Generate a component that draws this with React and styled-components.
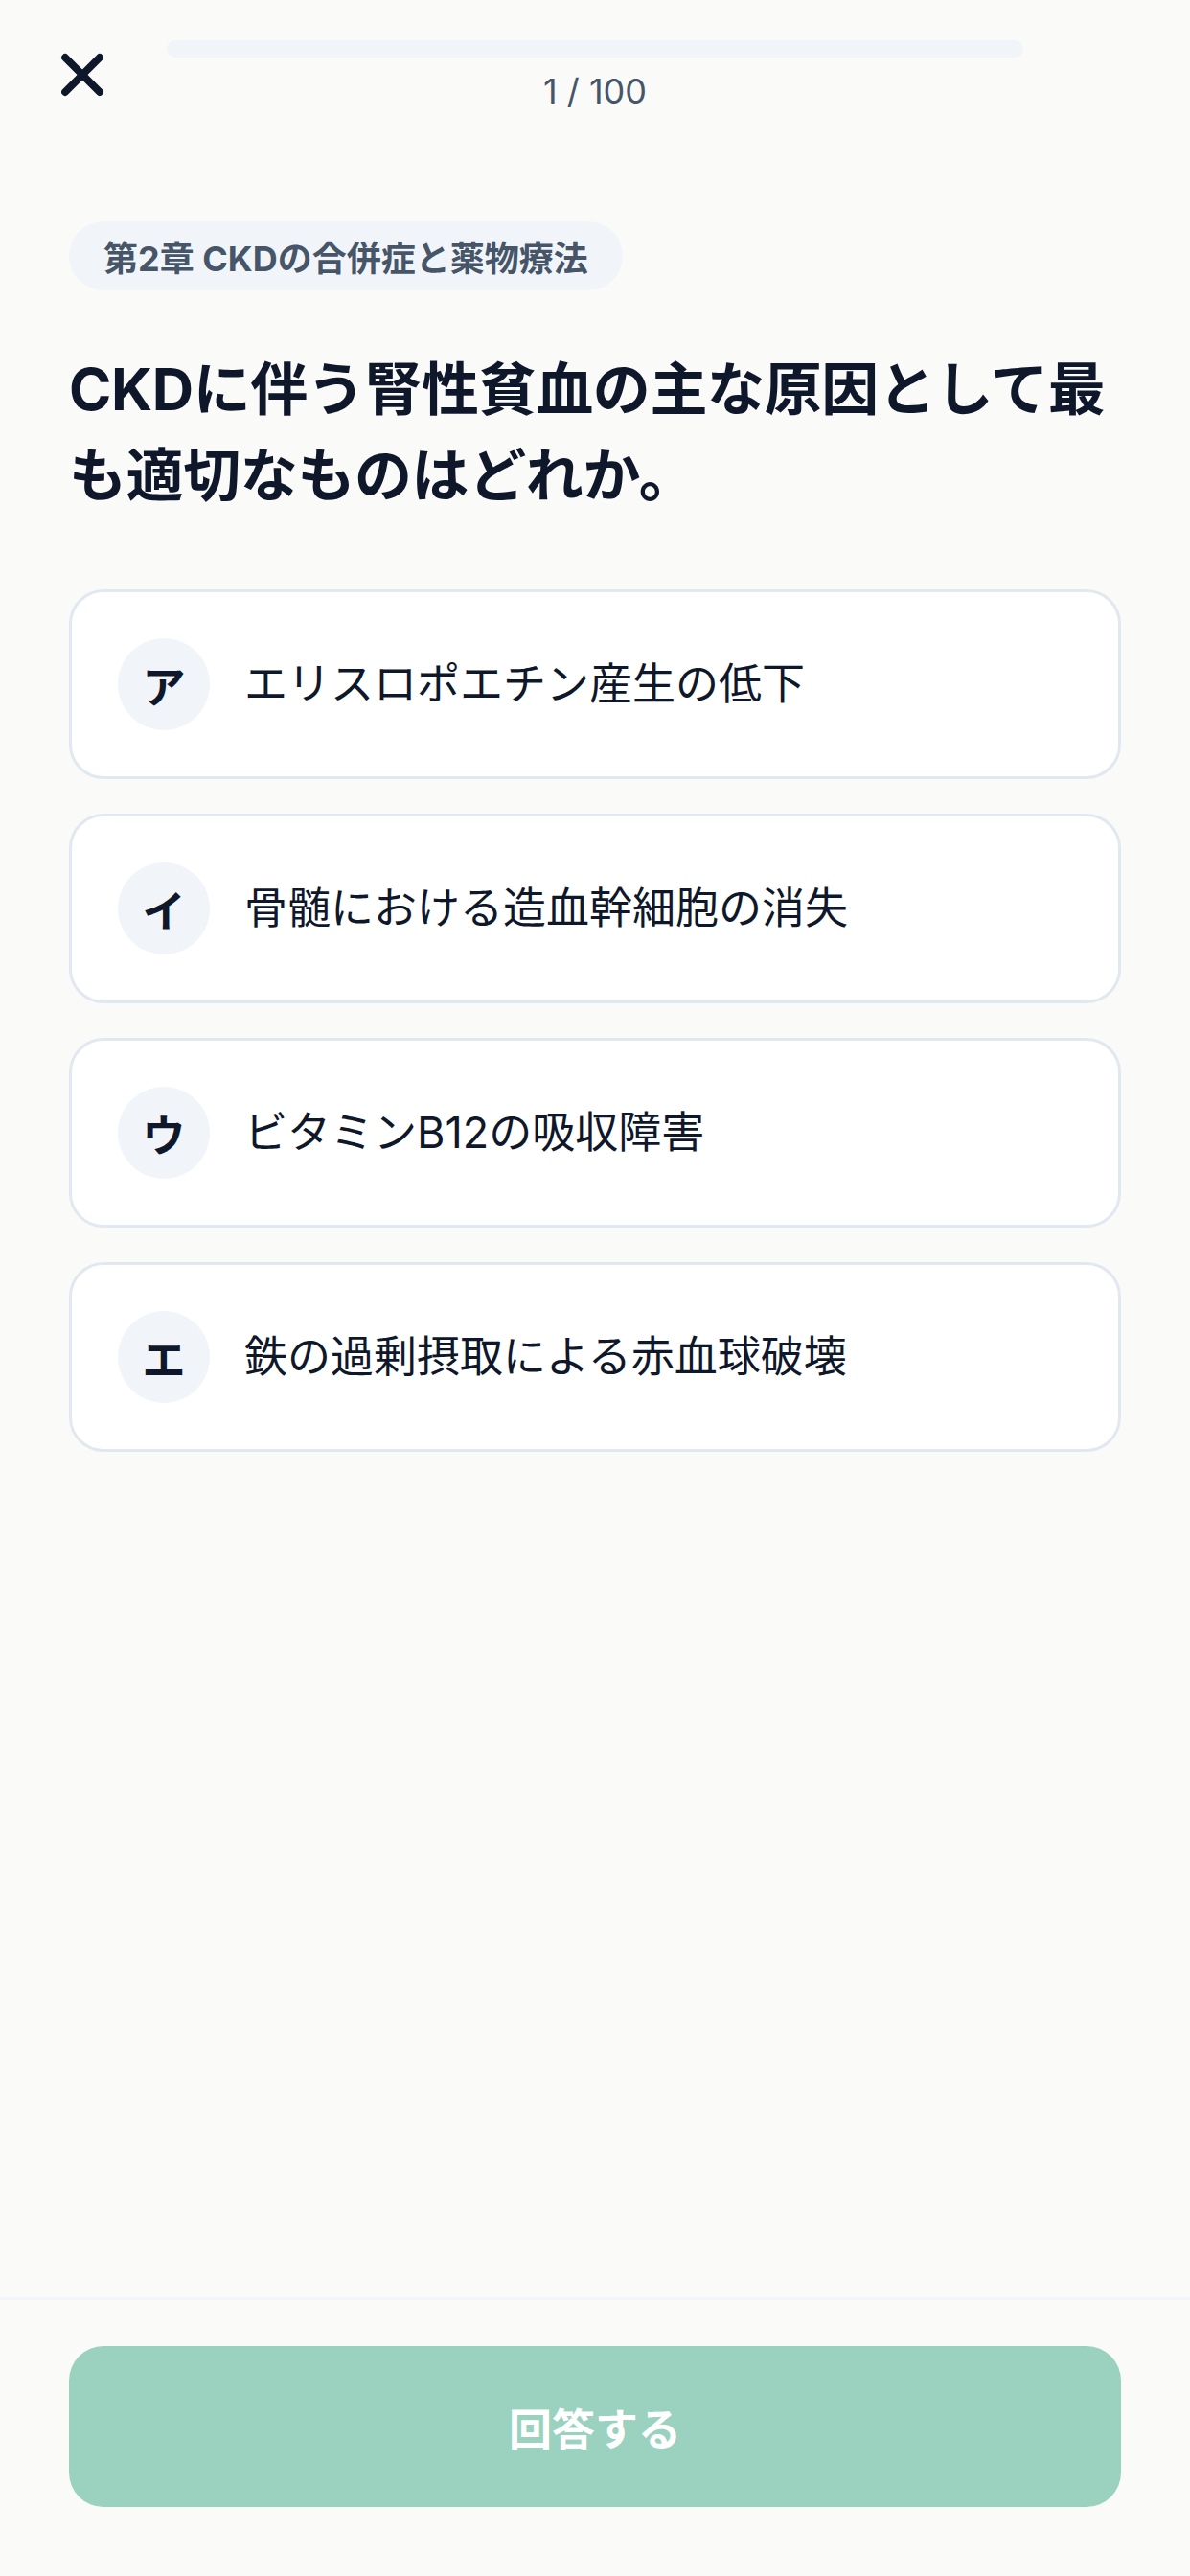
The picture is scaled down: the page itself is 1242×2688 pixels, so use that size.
import React from "react";
import styled, { createGlobalStyle } from "styled-components";

const GlobalStyle = createGlobalStyle`
  html, body {
    margin: 0;
    padding: 0;
    background: #fafaf9;
  }
  * { box-sizing: border-box; }
  body {
    font-family: "Inter", "Noto Sans CJK JP", sans-serif;
    color: #0f172a;
  }
`;

const Page = styled.div`
  min-height: 2688px;
  display: flex;
  flex-direction: column;
  background: #fafaf9;
`;

const Header = styled.header`
  display: flex;
  align-items: flex-start;
  gap: 46px;
  padding: 36px 44px 0;
  height: 120px;
`;

const CloseButton = styled.button`
  width: 84px;
  height: 84px;
  flex: none;
  border: none;
  background: transparent;
  padding: 0;
  display: flex;
  align-items: center;
  justify-content: center;
  color: #0f172a;
`;

const ProgressArea = styled.div`
  flex: 1;
  display: flex;
  flex-direction: column;
  align-items: center;
  padding-top: 6px;
  gap: 17px;
`;

const Track = styled.div`
  width: 100%;
  height: 18px;
  border-radius: 9px;
  background: #f1f5f9;
  overflow: hidden;
`;

const Fill = styled.div`
  height: 100%;
  background: #10b981;
  border-radius: 9px;
`;

const Counter = styled.div`
  font-family: "Inter", "Noto Sans CJK JP", sans-serif;
  font-size: 36px;
  line-height: 36px;
  color: #475569;
`;

const Spacer = styled.div`
  width: 84px;
  flex: none;
`;

const Main = styled.main`
  flex: 1;
  padding: 111px 72px 0;
  display: flex;
  flex-direction: column;
  align-items: flex-start;
`;

const ChapterTag = styled.div`
  height: 72px;
  padding: 0 36px;
  border-radius: 36px;
  background: #f1f5f9;
  color: #475569;
  font-weight: 700;
  font-size: 36px;
  display: flex;
  align-items: center;
  font-family: "Inter", "Noto Sans CJK JP", sans-serif;
`;

const Question = styled.h1`
  margin: 58px 0 0;
  font-size: 60px;
  line-height: 90px;
  font-weight: 700;
  letter-spacing: -0.4px;
  color: #0f172a;
  font-family: "Inter", "Noto Sans CJK JP", sans-serif;
`;

const OptionList = styled.div`
  margin-top: 74px;
  width: 100%;
  display: flex;
  flex-direction: column;
  gap: 36px;
`;

const OptionCard = styled.button`
  width: 100%;
  height: 198px;
  border: 3px solid #e2e8f0;
  border-radius: 36px;
  background: #ffffff;
  display: flex;
  align-items: center;
  gap: 36px;
  padding: 0 48px;
  text-align: left;
  font-family: "Inter", "Noto Sans CJK JP", sans-serif;
`;

const Badge = styled.span`
  width: 96px;
  height: 96px;
  flex: none;
  border-radius: 50%;
  background: #f1f5f9;
  color: #0f172a;
  font-weight: 700;
  font-size: 45px;
  display: flex;
  align-items: center;
  justify-content: center;
`;

const OptionText = styled.span`
  font-size: 45px;
  line-height: 66px;
  color: #0f172a;
`;

const Footer = styled.footer`
  border-top: 3px solid #f1f5f9;
  padding: 48px 72px 72px;
`;

const SubmitButton = styled.button`
  width: 100%;
  height: 168px;
  border: none;
  border-radius: 36px;
  background: #9ad2bf;
  color: #ffffff;
  font-size: 45px;
  font-weight: 700;
  font-family: "Inter", "Noto Sans CJK JP", sans-serif;
`;

const options = [
  { key: "ア", text: "エリスロポエチン産生の低下" },
  { key: "イ", text: "骨髄における造血幹細胞の消失" },
  { key: "ウ", text: "ビタミンB12の吸収障害" },
  { key: "エ", text: "鉄の過剰摂取による赤血球破壊" },
];

export default function App() {
  const current = 1;
  const total = 100;
  return (
    <>
      <GlobalStyle />
      <Page>
        <Header>
          <CloseButton aria-label="close">
            <svg width="72" height="72" viewBox="0 0 24 24" fill="none" stroke="currentColor" strokeWidth="2.6" strokeLinecap="round" strokeLinejoin="round">
              <path d="M18 6 6 18" />
              <path d="m6 6 12 12" />
            </svg>
          </CloseButton>
          <ProgressArea>
            <Track>
              <Fill style={{ width: `${(current / total) * 0}%` }} />
            </Track>
            <Counter>{current} / {total}</Counter>
          </ProgressArea>
          <Spacer />
        </Header>
        <Main>
          <ChapterTag>第2章 CKDの合併症と薬物療法</ChapterTag>
          <Question>CKDに伴う腎性貧血の主な原因として最も適切なものはどれか。</Question>
          <OptionList>
            {options.map((o) => (
              <OptionCard key={o.key}>
                <Badge>{o.key}</Badge>
                <OptionText>{o.text}</OptionText>
              </OptionCard>
            ))}
          </OptionList>
        </Main>
        <Footer>
          <SubmitButton>回答する</SubmitButton>
        </Footer>
      </Page>
    </>
  );
}
